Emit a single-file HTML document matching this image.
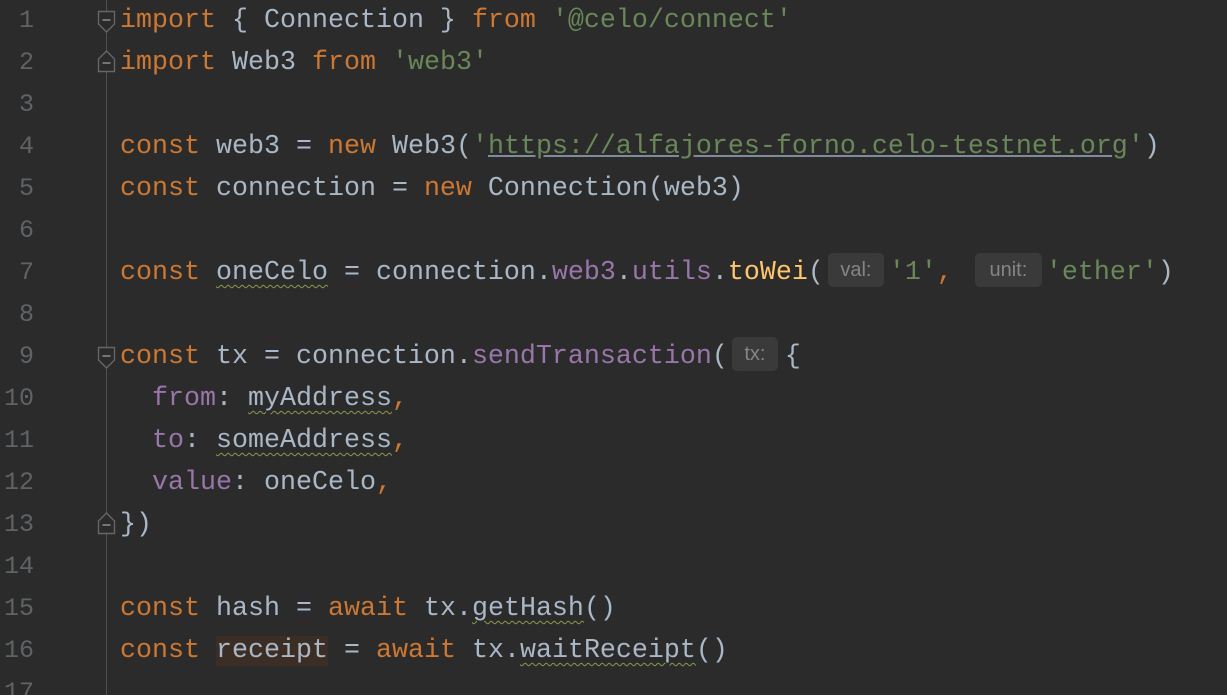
<!DOCTYPE html>
<html><head><meta charset="utf-8"><style>
html,body{margin:0;padding:0;background:#2b2b2b;width:1227px;height:695px;overflow:hidden}
.ed{position:relative;width:1227px;height:695px;font-family:"Liberation Mono","DejaVu Sans Mono",monospace;font-size:26.67px;letter-spacing:0;}
.gl{position:absolute;left:106px;top:0;width:1px;height:695px;background:#505050}
.ln{position:absolute;left:0;width:34px;text-align:right;color:#5f6366;height:42px;line-height:42px;font-size:25px}
.code{position:absolute;left:120px;white-space:pre;height:42px;line-height:42px;color:#a9b7c6}
.k{color:#cc7832}.s{color:#6a8759}.p{color:#9876aa}.f{color:#ffc66d}
.u{text-decoration:underline;text-decoration-color:#7f8b9a}
.w{text-decoration:underline wavy #8a9a4a;text-decoration-thickness:1px;text-underline-offset:5px}
.h{display:inline-block;background:#3a3a3a;color:#858585;border-radius:5px;font-family:"Liberation Sans",sans-serif;font-size:20px;letter-spacing:0;height:34px;line-height:34px;vertical-align:middle;text-align:center;margin-top:-4px}
.hl{background:#3c2e25}
.fold{position:absolute;left:97px}
</style></head><body><div class="ed">
<div class="gl"></div>
<div class="ln" style="top:0px">1</div>
<div class="ln" style="top:42px">2</div>
<div class="ln" style="top:84px">3</div>
<div class="ln" style="top:126px">4</div>
<div class="ln" style="top:168px">5</div>
<div class="ln" style="top:210px">6</div>
<div class="ln" style="top:252px">7</div>
<div class="ln" style="top:294px">8</div>
<div class="ln" style="top:336px">9</div>
<div class="ln" style="top:378px">10</div>
<div class="ln" style="top:420px">11</div>
<div class="ln" style="top:462px">12</div>
<div class="ln" style="top:504px">13</div>
<div class="ln" style="top:546px">14</div>
<div class="ln" style="top:588px">15</div>
<div class="ln" style="top:630px">16</div>
<div class="ln" style="top:672px">17</div>

<svg class="fold" style="top:10px" width="20" height="26"><path d="M1.5 1.5H17.5V14L9.5 22L1.5 14Z" fill="#2b2b2b" stroke="#666" stroke-width="1.4"/><path d="M5.5 10H13.5" stroke="#888" stroke-width="1.6"/></svg>
<svg class="fold" style="top:47px" width="20" height="26"><path d="M1.5 24.5H17.5V12L9.5 4L1.5 12Z" fill="#2b2b2b" stroke="#666" stroke-width="1.4"/><path d="M5.5 16H13.5" stroke="#888" stroke-width="1.6"/></svg>
<svg class="fold" style="top:346px" width="20" height="26"><path d="M1.5 1.5H17.5V14L9.5 22L1.5 14Z" fill="#2b2b2b" stroke="#666" stroke-width="1.4"/><path d="M5.5 10H13.5" stroke="#888" stroke-width="1.6"/></svg>
<svg class="fold" style="top:509px" width="20" height="26"><path d="M1.5 24.5H17.5V12L9.5 4L1.5 12Z" fill="#2b2b2b" stroke="#666" stroke-width="1.4"/><path d="M5.5 16H13.5" stroke="#888" stroke-width="1.6"/></svg>

<div class="code" style="top:0px"><span class="k">import</span> { Connection } <span class="k">from</span> <span class="s">'@celo/connect'</span></div>
<div class="code" style="top:42px"><span class="k">import</span> Web3 <span class="k">from</span> <span class="s">'web3'</span></div>
<div class="code" style="top:126px"><span class="k">const</span> web3 = <span class="k">new</span> Web3(<span class="s">'<span class="u">https://alfajores-forno.celo-testnet.org</span>'</span>)</div>
<div class="code" style="top:168px"><span class="k">const</span> connection = <span class="k">new</span> Connection(web3)</div>
<div class="code" style="top:252px"><span class="k">const</span> <span class="w">oneCelo</span> = connection.<span class="p">web3</span>.<span class="p">utils</span>.<span class="f">toWei</span>(<span class="h" style="width:56px;margin-left:4px;margin-right:5px">val:</span><span class="s">'1'</span><span class="k">,</span> <span class="h" style="width:67px;margin-left:6px;margin-right:4px">unit:</span><span class="s">'ether'</span>)</div>
<div class="code" style="top:336px"><span class="k">const</span> tx = connection.<span class="p">sendTransaction</span>(<span class="h" style="width:46px;margin-left:4px;margin-right:7px">tx:</span>{</div>
<div class="code" style="top:378px">  <span class="p">from</span>: <span class="w">myAddress</span><span class="k">,</span></div>
<div class="code" style="top:420px">  <span class="p">to</span>: <span class="w">someAddress</span><span class="k">,</span></div>
<div class="code" style="top:462px">  <span class="p">value</span>: oneCelo<span class="k">,</span></div>
<div class="code" style="top:504px">})</div>
<div class="code" style="top:588px"><span class="k">const</span> hash = <span class="k">await</span> tx.<span class="w">getHash</span>()</div>
<div class="code" style="top:630px"><span class="k">const</span> <span class="hl">receipt</span> = <span class="k">await</span> tx.<span class="w">waitReceipt</span>()</div>
</div></body></html>
